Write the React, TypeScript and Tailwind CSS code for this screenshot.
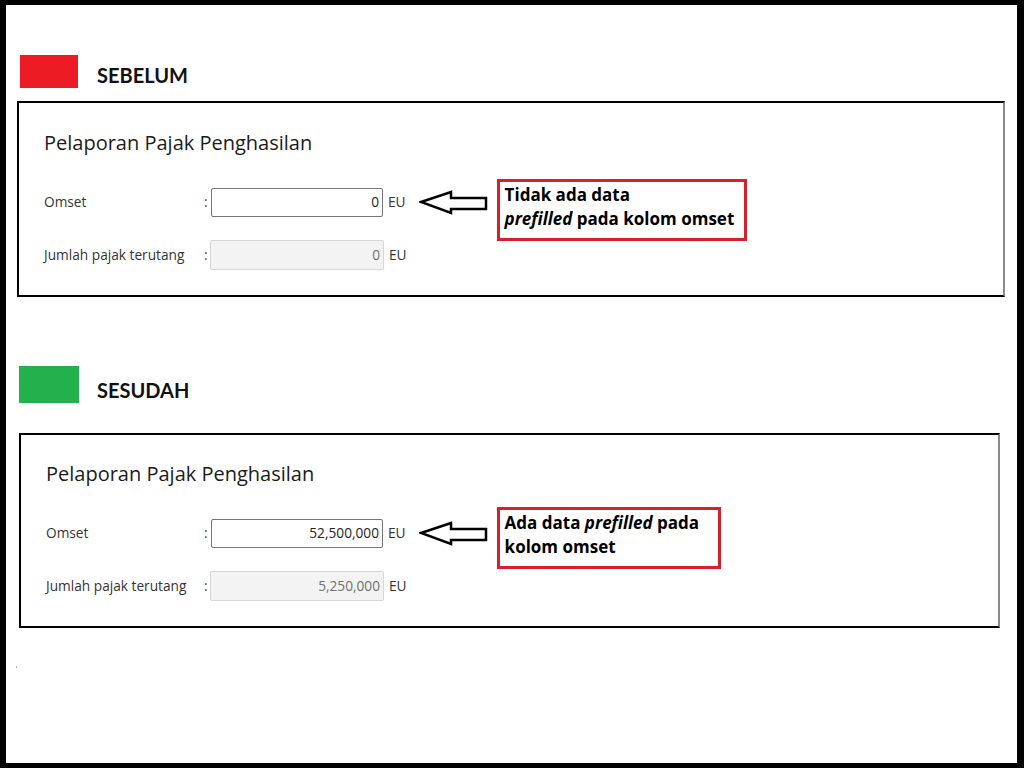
import React from "react"

const formFont = { fontFamily: '"Open Sans", "Noto Sans", sans-serif' }
const headFont = { fontFamily: 'Lato, "Open Sans", sans-serif' }
const noteFont = { fontFamily: '"Open Sans", "Noto Sans", sans-serif' }

function Arrow() {
  return (
    <svg width="70" height="26" viewBox="0 0 70 26" className="shrink-0">
      <polygon
        points="2,12 32,2 32,8 67,8 67,19 32,19 32,23"
        fill="white"
        stroke="black"
        strokeWidth="2.5"
        strokeLinejoin="miter"
      />
    </svg>
  )
}

function Field({
  label,
  value,
  labelWidth,
  disabled,
}: {
  label: string
  value: string
  labelWidth: string
  disabled?: boolean
}) {
  return (
    <>
      <span className={`${labelWidth} shrink-0 text-[13.7px] text-[#333]`}>{label}</span>
      <span className="w-[7px] shrink-0 text-[13.7px] text-[#444]">:</span>
      <div
        className={
          disabled
            ? "-ml-[1px] w-[174px] h-[30px] shrink-0 flex items-center justify-end pr-[3px] rounded-[2px] border border-[#d6d6d6] bg-[#f3f3f3] text-[13.7px] text-[#707070]"
            : "w-[172px] h-[29px] shrink-0 flex items-center justify-end pr-[3px] rounded-[2px] border border-[#767676] bg-white text-[13.7px] text-[#222]"
        }
      >
        {value}
      </div>
      <span className="ml-[5px] text-[13.7px] text-[#333]">EU</span>
    </>
  )
}

function Panel({
  omset,
  pajak,
  note,
  noteWidth,
  noteShift,
  labelWidth,
  className,
}: {
  omset: string
  pajak: string
  note: React.ReactNode
  noteWidth: string
  noteShift: string
  labelWidth: string
  className: string
}) {
  return (
    <div className={className} style={formFont}>
      <h2 className="text-[20px] leading-[28px] text-[#1b1b1b]">Pelaporan Pajak Penghasilan</h2>
      <div className="mt-[31px] h-[29px] flex items-center">
        <Field label="Omset" value={omset} labelWidth={labelWidth} />
        <div className="ml-[13px]">
          <Arrow />
        </div>
        <div
          className={`ml-[8px] ${noteWidth} ${noteShift} h-[62px] shrink-0 border-[3px] border-[#d7202a] px-[5px] pt-[1px] text-[17px] leading-[24px] font-bold text-black`}
          style={noteFont}
        >
          {note}
        </div>
      </div>
      <div className="mt-[23px] h-[30px] flex items-center">
        <Field label="Jumlah pajak terutang" value={pajak} labelWidth={labelWidth} disabled />
      </div>
    </div>
  )
}

export default function App() {
  return (
    <div className="w-[1024px] h-[768px] bg-white border-t-[5px] border-l-[6px] border-r-[7px] border-b-[5px] border-black overflow-hidden">
      <div className="pt-[50px] pl-[14px] flex items-start">
        <div className="w-[58px] h-[33px] bg-[#ed1c24]" />
        <span className="ml-[19px] mt-[8px] text-[20px] leading-[24px] font-bold text-[#111]" style={headFont}>
          SEBELUM
        </span>
      </div>

      <Panel
        className="mt-[13px] ml-[11px] w-[988px] h-[196px] border-2 border-black border-r-[#8a8a8a] pt-[26px] pl-[25px]"
        omset="0"
        pajak="0"
        labelWidth="w-[160px]"
        noteWidth="w-[250px]"
        noteShift="mt-[15px]"
        note={
          <>
            Tidak ada data
            <br />
            <i>prefilled</i> pada kolom omset
          </>
        }
      />

      <div className="mt-[69px] pl-[13px] flex items-start">
        <div className="w-[60px] h-[37px] bg-[#22b14c]" />
        <span className="ml-[18px] mt-[12px] text-[20px] leading-[24px] font-bold text-[#111]" style={headFont}>
          SESUDAH
        </span>
      </div>

      <Panel
        className="mt-[30px] ml-[13px] w-[981px] h-[195px] border-2 border-black border-r-[#8a8a8a] pt-[25px] pl-[25px]"
        omset="52,500,000"
        pajak="5,250,000"
        labelWidth="w-[158px]"
        noteWidth="w-[224px]"
        noteShift="mt-[9px]"
        note={
          <>
            Ada data <i>prefilled</i> pada
            <br />
            kolom omset
          </>
        }
      />

      <div className="mt-[38px] ml-[10px] w-[1px] h-[2px] bg-[#b0b0b0]" />
    </div>
  )
}
